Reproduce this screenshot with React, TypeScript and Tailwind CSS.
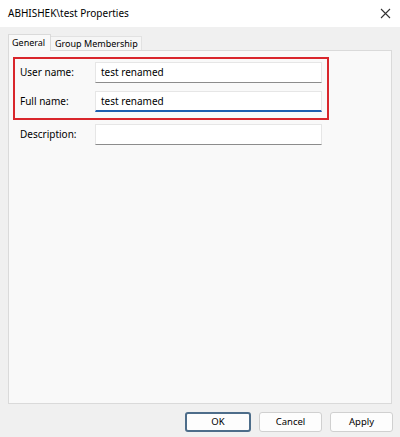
import React from 'react';

const font = { fontFamily: '"Noto Sans", "Open Sans", sans-serif' };

const Field: React.FC<{ label: string; value?: string; focused?: boolean }> = ({ label, value = '', focused = false }) => (
  <div className="flex items-center">
    <div className="w-[75px] text-[10px] text-black">{label}</div>
    <div
      className={`w-[227px] h-[21px] bg-white border border-[#e6e6e6] flex items-center pl-[5px] text-[10px] text-black ${
        focused ? 'border-b-2 border-b-[#1f5fb0]' : 'border-b-[#8c8c8c]'
      }`}
    >
      {value}
    </div>
  </div>
);

const DialogButton: React.FC<{ text: string; isDefault?: boolean }> = ({ text, isDefault = false }) => (
  <button
    className={`h-[20px] bg-[#fdfdfd] rounded-[3px] text-[9.5px] text-black flex items-center justify-center ${
      isDefault ? 'w-[66px] border-2 border-[#4d6d8a]' : 'w-[63px] border border-[#d0d0d0]'
    }`}
  >
    {text}
  </button>
);

export default function App() {
  return (
    <div className="w-[400px] h-[437px] bg-[#f0f0f0] flex flex-col" style={font}>
      {/* Title bar */}
      <div className="h-[27px] bg-white flex items-center justify-between pl-[8px] pr-[7px] text-[10px] text-black">
        <span>ABHISHEK\test Properties</span>
        <svg width="11" height="11" viewBox="0 0 11 11" className="mr-[2px]">
          <path d="M1 1 L10 10 M10 1 L1 10" stroke="#333" strokeWidth="1.1" />
        </svg>
      </div>

      {/* Tabs */}
      <div className="flex items-end h-[23px] px-[8px]">
        <div className="h-[17px] w-[43px] bg-[#f9f9f9] border border-b-0 border-[#dadada] text-[9px] text-black flex items-center pl-[3px] relative top-[1px]">
          General
        </div>
        <div className="h-[14px] pl-[4px] pr-[3px] bg-[#f6f6f6] border-t border-r border-[#e2e2e2] text-[9px] text-black flex items-center">
          Group Membership
        </div>
      </div>

      {/* Panel */}
      <div className="mx-[8px] h-[354px] bg-[#f9f9f9] border border-[#dadada] pt-[6px] pl-[4px]">
        <div className="w-[316px] h-[63px] border-2 border-[#d9262c] pl-[5px] pt-[3px] flex flex-col gap-[8px]">
          <Field label="User name:" value="test renamed" />
          <Field label="Full name:" value="test renamed" focused />
        </div>
        <div className="pl-[7px] mt-[4px]">
          <Field label="Description:" />
        </div>
      </div>

      {/* Buttons */}
      <div className="flex justify-end gap-[8px] pr-[7px] mt-[8px]">
        <DialogButton text="OK" isDefault />
        <DialogButton text="Cancel" />
        <DialogButton text="Apply" />
      </div>
    </div>
  );
}
